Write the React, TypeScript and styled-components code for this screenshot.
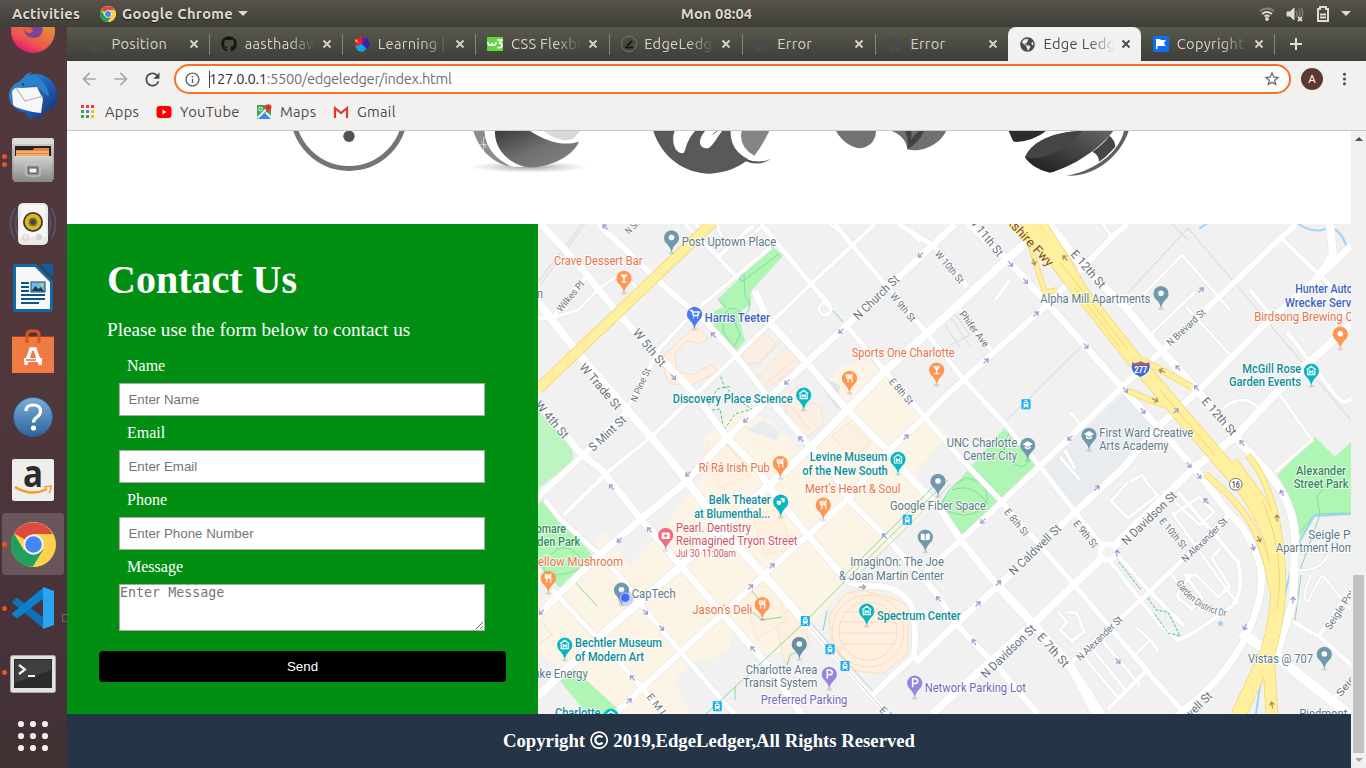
import React from 'react';
import styled, { createGlobalStyle, css } from 'styled-components';
import { FaGithub, FaRegCopyright, FaGlobeAmericas } from 'react-icons/fa';
import { MdArrowBack, MdArrowForward, MdRefresh, MdInfoOutline, MdStarBorder, MdMoreVert } from 'react-icons/md';

const uiFont = `'Ubuntu', 'Noto Sans', sans-serif`;

const GlobalStyle = createGlobalStyle`
  * { box-sizing: border-box; }
  html, body { margin: 0; padding: 0; overflow: hidden; }
  body { font-family: 'Liberation Serif', serif; background: #fff; }
`;

/* ---------- desktop shell ---------- */
const Desktop = styled.div`
  width: 1366px;
  height: 768px;
  display: flex;
  flex-direction: column;
  overflow: hidden;
`;
const TopBar = styled.header`
  height: 27px;
  flex: none;
  display: grid;
  grid-template-columns: 1fr auto 1fr;
  align-items: center;
  padding: 0 15px 0 12px;
  background: linear-gradient(#57534c, #3f3e38);
  color: #dfdbd2;
  font: bold 14.67px/27px ${uiFont};
  text-shadow: 0 1px 1px rgba(0, 0, 0, 0.6);
`;
const BarGroup = styled.div<{ $end?: boolean }>`
  display: flex;
  align-items: center;
  justify-content: ${p => (p.$end ? 'flex-end' : 'flex-start')};
`;
const BarText = styled.span<{ $spacing?: number; $width?: number; $left?: number }>`
  letter-spacing: ${p => p.$spacing ?? 0}px;
  width: ${p => (p.$width ? `${p.$width}px` : 'auto')};
  margin-left: ${p => p.$left ?? 0}px;
  white-space: nowrap;
`;
const BarIcon = styled.span<{ $left: number }>`
  display: flex;
  margin-left: ${p => p.$left}px;
`;
const Caret = styled.i<{ $left: number }>`
  margin-left: ${p => p.$left}px;
  border: 5px solid transparent;
  border-top-color: #dfdbd2;
  border-bottom: 0;
`;
const Workspace = styled.div`
  flex: 1;
  display: flex;
  min-height: 0;
`;
const DockBar = styled.nav`
  width: 67px;
  flex: none;
  overflow: hidden;
  background: linear-gradient(#51383c 0%, #50373b 45%, #48333a 80%, #443238 91%, #40302f 100%);
`;
const DockList = styled.ul`
  list-style: none;
  margin: -27px 0 0;
  padding: 0;
`;
const DockItem = styled.li<{ $active?: boolean; $drop?: number }>`
  position: relative;
  height: 64px;
  display: flex;
  align-items: center;
  justify-content: center;
  padding-top: ${p => (p.$drop ?? 0) * 2}px;
  &::before {
    content: '';
    position: absolute;
    inset: 1px 3px 1px 2px;
    border-radius: 4px;
    background: ${p => (p.$active ? 'rgba(255,255,255,0.17)' : 'transparent')};
  }
  svg { position: relative; display: block; overflow: visible; margin-right: 1px; }
`;
const Dots = styled.span`
  position: absolute;
  left: 2px;
  top: 0;
  height: 100%;
  display: flex;
  flex-direction: column;
  justify-content: center;
  gap: 3px;
  i { width: 5px; height: 5px; border-radius: 50%; background: #e95420; }
`;
const HiddenHint = styled.span`
  position: absolute;
  left: 61px;
  top: 35px;
  color: #7d7071;
  font: 12px ${uiFont};
`;

/* ---------- browser chrome ---------- */
const Browser = styled.main`
  flex: 1;
  min-width: 0;
  display: flex;
  flex-direction: column;
`;
const TabStrip = styled.div`
  height: 34px;
  flex: none;
  display: flex;
  padding-left: 9px;
  background: linear-gradient(#5a594e, #3e3d37);
`;
const TabBox = styled.div<{ $active?: boolean; $line?: boolean }>`
  position: relative;
  width: 133.17px;
  height: 34px;
  display: flex;
  align-items: center;
  padding: 0 7.5px 0 12px;
  color: ${p => (p.$active ? '#4b4b4b' : '#d6d3c9')};
  ${p => p.$active && css`background: #f2f1f0; border-radius: 8px 8px 0 0;`}
  &::after {
    content: '';
    position: absolute;
    right: -1px;
    top: 7px;
    width: 1px;
    height: 21px;
    background: ${p => (p.$line ? '#86847b' : 'transparent')};
  }
`;
const Favicon = styled.span`
  width: 16px;
  height: 16px;
  display: flex;
  align-items: center;
  flex: none;
`;
const TabTitle = styled.span<{ $fade?: boolean }>`
  flex: 1;
  min-width: 0;
  margin-left: 7.5px;
  overflow: hidden;
  white-space: nowrap;
  font: 14.67px/32px ${uiFont};
  letter-spacing: 0.3px;
  ${p => p.$fade && css`mask-image: linear-gradient(90deg, #000 60%, transparent 96%);`}
`;
const CloseMark = styled.svg`
  width: 16px;
  height: 16px;
  flex: none;
`;
const NewTab = styled.svg`
  width: 16px;
  height: 34px;
  margin-left: 14px;
`;
const Toolbar = styled.div`
  height: 36px;
  flex: none;
  display: flex;
  align-items: center;
  padding: 0 12px 0 12px;
  background: #f2f1f0;
  color: #4e4e4e;
`;
const ToolIcon = styled.span<{ $dim?: boolean; $gap?: number }>`
  display: flex;
  margin-right: ${p => p.$gap ?? 14}px;
  color: ${p => (p.$dim ? '#a9a8a7' : '#4a4a4a')};
`;
const Omnibox = styled.div`
  width: 1117px;
  height: 30px;
  flex: none;
  display: flex;
  align-items: center;
  padding: 0 8px;
  border: 2px solid #f97024;
  border-radius: 15px;
  background: #fff;
  color: #5f6368;
`;
const Url = styled.span`
  flex: 1;
  margin-left: 8px;
  padding-bottom: 1px;
  border-left: 1px solid #444;
  font: 14.67px/16px ${uiFont};
  letter-spacing: -0.3px;
  text-indent: -1px;
  color: #707070;
  b { font-weight: 400; color: #303030; }
`;
const Avatar = styled.span`
  width: 22px;
  height: 22px;
  flex: none;
  margin: 0 12px 0 10px;
  border-radius: 50%;
  background: #5d3a31;
  color: #fff;
  text-align: center;
  font: 11.5px/22px Roboto, sans-serif;
`;
const Bookmarks = styled.div`
  height: 34px;
  flex: none;
  display: flex;
  align-items: center;
  padding: 0 0 4px 14px;
  background: #f2f1f0;
  border-bottom: 1px solid #c9c8c7;
`;
const Bookmark = styled.span<{ $w: number }>`
  width: ${p => p.$w}px;
  display: flex;
  align-items: center;
  gap: 8px;
  color: #4b4b4b;
  font: 14.67px/20px ${uiFont};
  letter-spacing: 0.3px;
  svg { width: 16px; height: 16px; flex: none; }
`;

/* ---------- page ---------- */
const Viewport = styled.div`
  flex: 1;
  display: flex;
  min-height: 0;
`;
const Page = styled.div`
  width: 1284px;
  display: flex;
  flex-direction: column;
`;
const Brands = styled.section`
  height: 93px;
  flex: none;
  background: #fff;
  svg { display: block; }
`;
const Contact = styled.section`
  height: 490px;
  flex: none;
  display: grid;
  grid-template-columns: 471px 813px;
`;
const FormPanel = styled.form`
  background: #008f12;
  color: #fff;
  padding: 33px 32px 0;
`;
const Heading = styled.h1`
  margin: 0 8px;
  font: bold 40px/46px 'Liberation Serif', serif;
`;
const Lead = styled.p`
  margin: 16px 8px -1px;
  font-size: 19.2px;
  line-height: 22px;
`;
const Field = styled.label`
  display: block;
  height: 67px;
  padding: 17px 21px 0 20px;
  font-size: 16px;
  line-height: 18px;
`;
const FieldName = styled.span`
  display: block;
  padding-left: 8px;
  margin-bottom: 8px;
`;
const control = css`
  display: block;
  width: 366px;
  margin: 0;
  border: 1px solid #a9a9a9;
  border-radius: 0;
  background: #fff;
  outline: none;
  &::placeholder { color: #757575; }
`;
const Input = styled.input`
  ${control}
  height: 33px;
  padding: 0 8.4px;
  font: 13.333px 'Liberation Sans', sans-serif;
`;
const TextArea = styled.textarea`
  ${control}
  height: 47px;
  padding: 0;
  resize: both;
  font: 13.333px 'DejaVu Sans Mono', monospace;
`;
const Send = styled.button`
  display: block;
  width: 407px;
  height: 31px;
  margin-top: 43px;
  border: 0;
  border-radius: 4px;
  background: #000;
  color: #fff;
  font: 13.333px 'Liberation Sans', sans-serif;
`;
const Footer = styled.footer`
  flex: 1;
  display: flex;
  align-items: center;
  justify-content: center;
  gap: 5px;
  background: #253447;
  color: #fff;
  font: bold 18.72px/22px 'Liberation Serif', serif;
  svg { width: 18.3px; height: 18.3px; margin: -2px 0 0; }
`;
const ScrollTrack = styled.div`
  width: 15px;
  display: flex;
  flex-direction: column;
  align-items: center;
  background: #f1f1f1;
`;
const ScrollArrow = styled.i<{ $up?: boolean }>`
  border: 4px solid transparent;
  ${p => (p.$up
    ? css`margin-top: 6px; border-top: 0; border-bottom-color: #505050;`
    : css`margin-top: 5px; border-bottom: 0; border-top-color: #a3a3a3;`)}
`;
const Thumb = styled.div`
  width: 11px;
  height: 178px;
  margin-top: 434px;
  background: #c1c1c1;
`;

/* ---------- icons ---------- */
const ChromeLogo = ({ size }: { size: number }) => (
  <svg width={size} height={size} viewBox="0 0 48 48">
    <circle cx="24" cy="24" r="24" fill="#fdd14b" />
    <path d="M24 24 3.2 12A24 24 0 0 1 44.8 13H24z" fill="#dd4b3e" />
    <path d="M3.2 12A24 24 0 0 0 24 48l10.5-18L24 24 13.6 30z" fill="#1fa15d" />
    <path d="M24 13h20.8A24 24 0 0 1 23 48l11-18z" fill="#fdd14b" />
    <circle cx="24" cy="24" r="11" fill="#f1f1f1" />
    <circle cx="24" cy="24" r="8.8" fill="#4487f4" />
  </svg>
);

const Firefox = () => (
  <svg width="46" height="46" viewBox="0 0 46 46">
    <defs><linearGradient id="fx" x1="0.8" y1="0" x2="0.3" y2="1"><stop offset="0.35" stopColor="#e08a38" /><stop offset="0.75" stopColor="#ef5350" /><stop offset="1" stopColor="#e60f80" /></linearGradient></defs>
    <circle cx="23" cy="22" r="22" fill="url(#fx)" />
    <path d="M13 16q0 12 10 13t10-13z" fill="#7b4596" />
    <path d="M12 19q6-3 10 1 3 4-5 4z" fill="#e8603a" />
  </svg>
);
const Thunderbird = () => (
  <svg width="48" height="48" viewBox="0 0 48 48">
    <defs><linearGradient id="tb" x1="0" y1="0" x2="1" y2="1"><stop offset="0" stopColor="#3f97d6" /><stop offset="0.5" stopColor="#1d67bf" /><stop offset="1" stopColor="#1b2768" /></linearGradient></defs>
    <path d="M13 9C15 3 18 1 23 0l-3 3c14-4 28 5 28 21 0 8-3 13-7 15l1-4-5 7v-5l-6 10-5-2-5 3-5-7C6 38 0 32 0 24c0-8 6-14 13-15z" fill="url(#tb)" />
    <path d="M3 20Q5 14 13 16l15-1 6 12-2 14C20 40 7 36 4 33z" fill="#f7f7f7" />
    <path d="m7 16 9 13 18-5" fill="none" stroke="#b4b5b9" strokeWidth="1.2" />
    <path d="M8 16Q10 5 21 3q17 4 19 22L27 14q-8-2-19 2z" fill="#2d80ca" />
    <circle cx="14" cy="12.500" r="1.2" fill="#173c66" />
  </svg>
);
const Files = () => (
  <svg width="44" height="46" viewBox="0 0 44 46">
    <defs><linearGradient id="fi" x2="0" y2="1"><stop stopColor="#d2d2d0" /><stop offset="1" stopColor="#888886" /></linearGradient></defs>
    <rect x="1" y="2" width="42" height="41" rx="2" fill="url(#fi)" />
    <rect x="1" y="1" width="42" height="6" rx="2" fill="#dcdcda" />
    <rect x="4" y="9" width="36" height="10" fill="#27221f" />
    <path d="M5 19v-6h17l1-2h15v8z" fill="#e88436" /><path d="M5 15h33M5 18h33" stroke="#fbd9ab" />
    <rect x="2.500" y="19" width="39" height="26" rx="1.500" fill="url(#fi)" />
    <rect x="15" y="28" width="14" height="11" rx="2" fill="#8f8f8d" stroke="#d1d1cf" />
    <rect x="18" y="31" width="8" height="5" fill="#f4f4f2" stroke="#555" />
  </svg>
);
const Speaker = () => (
  <svg width="48" height="44" viewBox="0 0 48 44">
    <path d="M6 6q-9 16 0 31M10 8q-7 14 0 27M42 6q9 16 0 31M38 8q7 14 0 27" fill="none" stroke="#526e9d" strokeWidth="2" opacity=".5" />
    <rect x="9" y="1" width="30" height="42" rx="5" fill="#e9e9e7" />
    <path d="M12 3h24l2 32H10z" fill="#fbfbfa" opacity=".7" />
    <circle cx="24" cy="20" r="10" fill="#3d3b37" /><circle cx="24" cy="20" r="8.200" fill="#dbb820" />
    <circle cx="24" cy="20" r="4.500" fill="#8e7720" /><circle cx="24" cy="20" r="2.700" fill="#3b4656" />
    <circle cx="30" cy="35" r="3" fill="#d3d3d1" /><rect x="14" y="33" width="5" height="5" rx="1" fill="none" stroke="#ccc" />
  </svg>
);
const Writer = () => (
  <svg width="40" height="48" viewBox="0 0 40 48">
    <path d="M3 0h20l17 17v28a3 3 0 0 1-3 3H3a3 3 0 0 1-3-3V3a3 3 0 0 1 3-3z" fill="#0f6aa5" />
    <path d="M28 0h12v12q-7-2-12-12z" fill="#0a60a0" />
    <path d="M3 3h19l15 15v27H3z" fill="#f7f7f7" />
    <path d="M8 19h8M8 23h8M8 27h8M8 31h24M8 35h24M8 39h18" stroke="#0f5586" strokeWidth="2" />
    <rect x="18" y="18" width="14" height="10" fill="#73bce9" stroke="#164d73" />
    <path d="m18.500 27 4-5 3 3 2-2 4 4.500z" fill="#173e55" /><circle cx="29" cy="20.500" r="1.500" fill="#f2c44b" />
  </svg>
);
const Software = () => (
  <svg width="42" height="44" viewBox="0 0 42 44">
    <path d="M0 6h42v8H0z" fill="#a93f14" />
    <path d="M0 7h42v36H0z" fill="#ee7b43" /><path d="M0 33h42v10H0z" fill="#f27a47" />
    <path d="M15 13V5q0-4 4-4h4q4 0 4 4v8" fill="none" stroke="#d9541d" strokeWidth="3" />
    <path d="m13.500 35 5.500-16h4l5.500 16" fill="none" stroke="#fff" strokeWidth="3.600" />
    <path d="M12 30h18" stroke="#fff" strokeWidth="4" /><path d="M14 30h10" stroke="#e66c32" strokeWidth="1.500" />
  </svg>
);
const HelpIcon = () => (
  <svg width="40" height="40" viewBox="0 0 40 40">
    <defs><linearGradient id="hp" x2="0" y2="1"><stop stopColor="#7aaedb" /><stop offset="1" stopColor="#2e6499" /></linearGradient></defs>
    <circle cx="20" cy="20" r="19.500" fill="url(#hp)" stroke="#2e5f92" />
    <path d="M13 14q0-6 7-6 7.500 0 7.500 6 0 4-4 6.500-3 2-3 5" fill="none" stroke="#fff" strokeWidth="3.200" />
    <circle cx="20.500" cy="31" r="2.600" fill="#fff" />
  </svg>
);
const Amazon = () => (
  <svg width="42" height="42" viewBox="0 0 42 42">
    <rect width="42" height="42" rx="2" fill="#eeeeed" />
    <text x="11" y="28" fontFamily="'Open Sans', sans-serif" fontWeight="700" fontSize="38" textLength="20" lengthAdjust="spacingAndGlyphs" fill="#2b2b2b">a</text>
    <path d="M3 28q16 10 32 2" fill="none" stroke="#f79a1d" strokeWidth="2.500" />
    <path d="m32 28 7-1q0 4-2 7" fill="none" stroke="#f79a1d" strokeWidth="1.500" />
  </svg>
);
const Code = () => (
  <svg width="42" height="42" viewBox="0 0 42 42">
    <path d="M0 14.500 5 10.500 32 31v11L0 15.500z" fill="#1070b8" />
    <path d="M0 27.500 5 31.500 32 11V0L0 26.500z" fill="#0c82ce" />
    <path d="m31 0 11 4v34l-11 4z" fill="#2aa5ed" />
  </svg>
);
const Terminal = () => (
  <svg width="46" height="38" viewBox="0 0 46 38">
    <rect x=".5" y=".5" width="45" height="37" rx="2" fill="#e2e2e0" stroke="#a9a9a7" />
    <path d="M4 4h38v29H4z" fill="#2b2b2b" /><path d="M5 5h36v10L5 28z" fill="#3f3f3e" />
    <path d="m9 10 6 4.500-6 4.500M18 21h7" fill="none" stroke="#f2f2f2" strokeWidth="2.200" />
  </svg>
);
const AppGrid = () => (
  <svg width="32" height="32" viewBox="0 0 32 32" fill="#f1efee">
    {[4, 16, 28].map(y => [4, 16, 28].map(x => <circle key={`${x}-${y}`} cx={x} cy={y} r="3.100" />))}
  </svg>
);

const DarkGlobe = () => <FaGlobeAmericas size={15} color="#4b4c4b" />;
const RedBlue = () => (
  <svg width="16" height="16" viewBox="0 0 16 16">
    <path d="M8 0 1 4v7l7-3z" fill="#ed1c2b" /><path d="m8 0 7 5-2 6-5-3z" fill="#5a25b8" /><path d="m8 8-7 2 3 5 5 1 4-4z" fill="#0aa6e0" />
    <path d="m8 8 5 5 3-5-3-6z" fill="#3422a3" /><path d="m1 5 4 2-3-4z" fill="#fde042" />
  </svg>
);
const W3 = () => (
  <svg width="16" height="16" viewBox="0 0 16 16">
    <rect y="1" width="16" height="14" fill="#63d63f" />
    <path d="M1 6q0 4 2.500 3Q5 9 5 7q0 3 2 2 2 0 2-3M10 4h5l-2.500 3Q15 7 15 9.500t-4.500 2" fill="none" stroke="#fff" strokeWidth="1.700" />
  </svg>
);
const Compass = () => (
  <svg width="16" height="16" viewBox="0 0 16 16"><path d="M5 .7h6L15.300 5v6L11 15.300H5L.7 11V5z" fill="#484842" stroke="#77766e" /><path d="m6 10 5-5M4 11.500h8" stroke="#111" strokeWidth="1.600" /></svg>
);
const Flag = () => (
  <svg width="16" height="16" viewBox="0 0 16 16"><rect width="16" height="16" rx="1" fill="#0b6fee" /><path d="M3 3v10h1.500v-3h8l-1.500-3 2-3H8L7 3z" fill="#fff" /></svg>
);

const tabs = [
  { title: 'Position', icon: <DarkGlobe />, line: true },
  { title: 'aasthadaw', icon: <FaGithub size={16} color="#161614" />, line: true, fade: true },
  { title: 'Learning | ', icon: <RedBlue />, line: true, fade: true },
  { title: 'CSS Flexbox', icon: <W3 />, line: true, fade: true },
  { title: 'EdgeLedger', icon: <Compass />, line: true, fade: true },
  { title: 'Error', icon: <DarkGlobe />, line: true },
  { title: 'Error', icon: <DarkGlobe /> },
  { title: 'Edge Ledger', icon: <FaGlobeAmericas size={15} color="#4b4b4b" />, active: true, fade: true },
  { title: 'Copyright ', icon: <Flag />, line: true, fade: true },
];

const dock = [
  { icon: <Firefox /> }, { icon: <Thunderbird /> }, { icon: <Files />, dots: 2 }, { icon: <Speaker /> },
  { icon: <Writer /> }, { icon: <Software /> }, { icon: <HelpIcon />, drop: 1 }, { icon: <Amazon /> },
  { icon: <ChromeLogo size={45} />, dots: 1, active: true }, { icon: <Code />, dots: 1, hint: true },
  { icon: <Terminal />, dots: 1, drop: 1.5 }, { icon: <AppGrid /> },
];

/* ---------- map ---------- */
const roads: [string, number][] = [
  ['M541 224 578 264 621 317 698 397 726 437 758 469 768 486 805 532 848 582', 7],
  ['M848 582Q862 587 880 586Q902 589 912 606Q917 630 914 656L871 696', 6],
  ['M538 302 581 357 651 437 678 469 725 532 765 576 805 622', 8],
  ['M805 622 871 696 888 714', 5],
  ['M598 224 665 287 705 321 735 354 771 401 811 447 831 469 848 499 885 536 935 592 958 626 1002 672 1038 714', 6],
  ['M755 291 768 321 808 364 848 411 888 451 902 469 938 506 962 542 998 586 1035 626 1070 666 1095 714', 7],
  ['M998 586 1035 626 1070 666 1102 716', 9],
  ['M685 224 718 257 738 279', 4], ['M718 257 748 230 754 226', 4],
  ['M761 224 811 284 830 306', 5], ['M825 303a6 6 0 1 0 6 5z', 3],
  ['M845 324 885 371 925 417 962 460 1002 502 1072 582 1145 669 1185 714', 5],
  ['M835 224 851 244 891 291 925 331 965 381 1005 424 1042 469 1075 512 1108 552', 5],
  ['M1042 469 1075 512', 3], ['M898 224 931 244 945 257 967 287', 5], ['M958 307 992 351', 4],
  ['M968 224 1005 257 1048 304 1125 391 1158 427 1195 469', 7],
  ['M1195 469 1228 512Q1250 530 1261 569Q1265 600 1241 646Q1222 680 1185 709L1178 716', 7],
  ['M1048 222 1078 261 1125 307 1162 351 1198 391 1235 437 1265 469Q1293 500 1295 536L1293 602 1276 655', 8],
  ['M1241 633 1281 660 1351 716', 10],
  ['M698 307 661 347 628 406', 4], ['M771 247 695 311', 4],
  ['M875 224 811 284 735 357 651 437 608 472 564 515', 4],
  ['M628 411 581 457 538 497', 6], ['M538 401 581 454 601 469 641 519 681 566 725 617 771 669 801 714', 7],
  ['M955 224 931 247 805 364 728 437 698 469 681 486 641 519 598 556 561 592 538 616', 7],
  ['M1048 224 1005 261 945 317 885 371 811 447 765 489 681 566 605 632 538 696', 8],
  ['M1128 224 1112 237 1048 304 992 354 945 397 925 417 885 454 848 499 765 574 681 652 641 689 615 714', 6],
  ['M1296 224 1282 237 1162 351 1125 384 1042 464 1002 502 962 539 925 572', 6],
  ['M1351 246 1328 268 1262 327 1198 391 1158 427 1122 469 1075 512 998 586 945 634 916 662', 7],
  ['M1330 224 1333 254 1317 279', 8],
  ['M1351 324 1275 394 1235 437 1195 467 1108 552 1035 622 945 702 932 714', 8],
  ['M1072 662 1145 596 1232 512', 5], ['M1108 709 1145 672', 4],
  ['M545 500 561 520 600 555 625 582 645 610 681 652 725 704 735 714', 5],
  ['M552 590 605 646 642 688 664 714', 5],
  ['M601 286 578 310 552 318', 3], ['M538 318 552 318 587 276', 4], ['M600 288 623 272 640 292', 3],
  ['M1129 309 1182 255 1230 310M1186 307 1232 357M1150 335 1195 292', 3],
  ['M1280 237 1330 285 1345 315M1250 290 1275 320M1287 332 1335 395Q1345 407 1351 398', 4],
  ['M1280 395 1312 440 1275 472M1222 410Q1240 392 1258 407', 3],
  ['M1106 556 1160 625 1178 640Q1190 637 1232 606Q1245 590 1238 562L1178 492M1112 548 1148 590 1184 626', 4],
  ['M1130 482 1142 475Q1150 488 1158 495L1128 518 1111 501 1128 482', 3],
  ['M1173 515 1199 497 1214 512 1200 525 1163 491M1172 513 1220 580 1238 604', 3],
  ['M1172 575 1184 592Q1196 612 1222 614M1192 575Q1176 590 1178 598L1192 609 1202 598 1185 575 1196 575 1218 597 1230 587 1212 558 1220 548', 3],
  ['M1058 612 1067 622 1060 630 1072 641 1084 632 1077 613 1067 612', 3],
  ['M1072 582 1096 610 1150 672M1090 646 1127 692M1135 655 1150 640 1137 628M1150 640 1158 650', 3],
  ['M1100 638 1140 685M1078 650 1120 700', 3], ['M1060 457 1080 480M1070 412 1080 424', 3],
  ['M1293 622 1320 637 1351 665M1318 637 1351 590M1332 700 1351 680', 4],
  ['M1311 575Q1300 600 1308 601L1322 575 1351 610M1298 570Q1320 572 1328 555', 2],
  ['M1103 224 1112 237M995 300 1010 280M1075 469 1065 450', 3],
  ['M696 224Q705 235 690 247M717 224Q725 250 738 244T762 226', 3],
  ['M830 224 846 236M908 230 920 242', 3],
];
const freeway: [string, number][] = [
  ['M1025 226 1038 271 1045 292 1057 290', 4], ['M1042 222 1068 262 1090 300', 6],
  ['M1142 360 1165 372 1192 387', 5], ['M1128 391 1150 400 1175 408', 5],
  ['M1248 455 1258 469Q1275 500 1280 540L1282 569', 5], ['M1205 474Q1235 498 1250 522T1272 590', 5],
  ['M1027 220 1072 281 1132 357 1178 411 1228 469Q1275 520 1278 575Q1280 610 1268 652L1238 716', 14],
  ['M1232 462 1262 504Q1285 550 1278 602L1268 650 1272 716', 11],
];
const cream = [
  '704,437 741,408 770,420 800,450 848,411 829,380 843,366 866,360 890,378 948,436 915,472 935,505 900,535 845,585 792,650 765,655 735,630 728,650 705,663 697,658 675,680 690,714 620,714 590,696 538,650 538,600 560,590 600,555 596,540 605,532 630,566 650,545 681,505 703,475',
];
type Kind = 'dot' | 'food' | 'bar' | 'cart' | 'museum' | 'book' | 'school' | 'park' | 'health' | 'mask';
const SLATE = '#7199ae', ORANGE = '#ff9752', TEAL = '#08b7c5', PURPLE = '#9587dd';
const pins: [number, number, string, Kind][] = [
  [671.5, 237.5, SLATE, 'dot'], [624, 278, ORANGE, 'bar'], [694.5, 314, '#4a7cf0', 'cart'], [936.7, 369.7, ORANGE, 'bar'],
  [849.5, 378, ORANGE, 'food'], [803.7, 394.7, TEAL, 'museum'], [898, 459, TEAL, 'museum'], [780.3, 463, ORANGE, 'food'],
  [780.7, 501.7, TEAL, 'mask'], [823.3, 504.7, ORANGE, 'food'], [665.7, 535, '#f26d7d', 'health'], [548.3, 578, ORANGE, 'food'],
  [621.5, 589.7, SLATE, 'dot'], [762.3, 604.3, ORANGE, 'food'], [564.7, 644.7, TEAL, 'museum'], [611, 715.7, TEAL, 'museum'],
  [799.3, 644, '#648fa5', 'dot'], [829.3, 674, PURPLE, 'park'], [914.7, 682.7, PURPLE, 'park'], [866.7, 610.7, TEAL, 'museum'],
  [925.3, 536.7, SLATE, 'book'], [938, 481, SLATE, 'dot'], [1161, 293.3, SLATE, 'dot'], [1340.3, 333.7, ORANGE, 'dot'],
  [1311.3, 370.7, TEAL, 'museum'], [1027.7, 445, SLATE, 'school'], [1089, 435, SLATE, 'school'], [1324.3, 654, SLATE, 'dot'],
];
const glyphs: Record<Kind, React.ReactNode> = {
  dot: <circle r="2.800" fill="#fff" />,
  food: <path d="M-3-4v3q0 1.500 1.500 1.500V4.500M-1.500-4v4M0-4v3q0 1.500-1.500 1.500M2.500 4.500V-4q-1.800 1.500-1.500 4.500h1.500" stroke="#fff" strokeWidth="1.100" fill="none" />,
  bar: <path d="M-3.800-3.500h7.600L.6.500v3h2v1h-5.200v-1h2v-3z" fill="#fff" />,
  cart: <path d="M-4.500-3.500h2l1.500 5h4.500l1-3.500H-2M-1.300 3.500h1M2.500 3.500h1" stroke="#fff" strokeWidth="1.500" fill="none" />,
  museum: <path d="M-4.500-1 0-4.500 4.500-1M-3.500-.5v4.500h7v-4.500M-1.500 3V0L0 1.500 1.500 0v3" stroke="#fff" strokeWidth="1.200" fill="none" />,
  book: <path d="M-4.500-3q3-.5 4 .8v6q-1.500-1-4-.8zM4.500-3q-3-.5-4 .8v6q1.500-1 4-.8z" fill="#fff" />,
  school: <path d="M-5-1 0-4l5 3-5 3zM-3 1v2q3 2.500 6 0V1L0 3z" fill="#fff" />,
  park: <path d="M-2 4.500v-8.500h2.300q2.700.2 2.700 2.500T.3.800H-2" stroke="#fff" strokeWidth="1.600" fill="none" />,
  health: <><rect x="-4" y="-2.500" width="8" height="6.500" rx="1" fill="#fff" /><path d="M-1.500-3.800h3M0-1v3.600M-1.800.8h3.600" stroke="#f26d7d" strokeWidth="1.200" /></>,
  mask: <path d="M-4-1h4.500v3q-2 2.500-4.500 0zM0-3.500h4v4H1.500v-2.500H0z" fill="#fff" />,
};
const cSlate = '#5d7a8a', cOrange = '#e8734a', cTeal = '#0d8f9a', cGreen = '#2b8d52', cBlue = '#3f64c0', cRed = '#cc566e', cPurple = '#7767b8';
const mediumLabels = [cTeal, cBlue, cGreen];
const places: [string, number, number, number, string, number?][] = [
  ['Post Uptown Place', 681.7, 246, 94.5, cSlate], ['Crave Dessert Bar', 554, 265, 88.5, cOrange], ['n', 537, 297.5, 6, cSlate],
  ['Harris Teeter', 704.7, 322, 65.3, cBlue], ['Discovery Place Science', 672.7, 403, 120, cTeal], ['Sports One Charlotte', 851.7, 357, 103, cOrange],
  ['Levine Museum', 809.7, 460.7, 77.5, cTeal], ['of the New South', 802.3, 474.5, 85.5, cTeal], ['Rí Rá Irish Pub', 698.7, 472, 71, cOrange],
  ["Mert's Heart & Soul", 805, 492.5, 95.5, cOrange], ['Belk Theater', 708.7, 504, 62, cTeal], ['at Blumenthal...', 694.3, 517.5, 76, cTeal],
  ['Pearl. Dentistry', 676, 531.5, 75, cRed], ['Reimagined Tryon Street', 676, 545.3, 121.5, cRed], ['Jul 30 11:00am', 676, 556.7, 60, cRed, 11],
  ['CapTech', 631.7, 598.3, 44, cSlate], ["Jason's Deli", 692.3, 613.5, 60, cOrange], ['Bechtler Museum', 575, 647, 87, cTeal],
  ['of Modern Art', 575, 660.5, 69, cTeal], ['Duke Energy', 526, 678, 61.7, cSlate], ['Charlotte', 555, 717, 45.5, cTeal],
  ['Romare', 529, 533, 37, cGreen], ['Bearden Park', 515, 546, 65.3, cGreen], ['Mellow Mushroom', 528, 565.7, 95, cOrange],
  ['Google Fiber Space', 890, 510.3, 96, cSlate], ['ImaginOn: The Joe', 850.3, 566.3, 93.7, cSlate], ['& Joan Martin Center', 839, 580, 104.7, cSlate],
  ['Spectrum Center', 877, 620, 83.7, cTeal], ['Charlotte Area', 745.7, 673.7, 71.7, cSlate], ['Transit System', 743, 687.3, 74.3, cSlate],
  ['Preferred Parking', 760.7, 704.3, 86.7, cPurple], ['Network Parking Lot', 924.7, 691.7, 101.3, cPurple], ['Alpha Mill Apartments', 1040.3, 303, 110, cSlate],
  ['Hunter Auto', 1295.3, 293.3, 57.5, cBlue], ['Wrecker Service', 1285, 307, 81, cBlue], ['Birdsong Brewing Co', 1254.3, 321.3, 105, cOrange],
  ['McGill Rose', 1242.3, 372.7, 59, cTeal], ['Garden Events', 1229, 386, 72, cTeal], ['UNC Charlotte', 946.7, 447, 70.7, cSlate],
  ['Center City', 963.3, 460.3, 53.7, cSlate], ['First Ward Creative', 1099.3, 437, 94, cSlate], ['Arts Academy', 1099.3, 450.3, 69.3, cSlate],
  ['Alexander', 1296, 474.7, 50, cGreen], ['Street Park', 1293.7, 488.3, 54.7, cGreen], ['Seigle Point', 1308.3, 538.7, 62, cSlate],
  ['Apartment Homes', 1276, 552, 90, cSlate], ['Vistas @ 707', 1248, 662.7, 65, cSlate], ['Piedmont', 1299.3, 718, 48, cSlate],
];
const streets: [string, number, number, number, number, number][] = [
  ['W 5th St', 649.7, 347.5, 45, 51, 12], ['W Trade St', 600.5, 386.5, 57, 49, 12], ['W 4th St', 552, 419.7, 45, 50, 12],
  ['S Mint St', 607.3, 433.3, 46, -43, 12], ['N Pine St', 640.5, 385, 36, -66, 9.5], ['Wilkes Pl', 570.3, 296.3, 37, -50, 9.5],
  ['N Sm', 633, 226, 18, -45, 10], ['N Church St', 876.3, 297.3, 58, -44, 12], ['W 9th St', 903, 307.3, 34, 50, 10],
  ['E 8th St', 901.3, 391.3, 31, 49, 10], ['W 10th St', 949.5, 267, 39, 50, 10], ['W 11th St', 986, 236, 48, 51, 12],
  ['E 12th St', 1088.3, 269, 46, 49, 12], ['E 12th St', 1219.3, 416.3, 46, 49, 12], ['N Brevard St', 1186, 327.3, 49, -43, 10],
  ['Phifer Ave', 974.3, 329, 42, 53, 10], ['E 8th St', 1016.7, 522.3, 32, 50, 10], ['N Caldwell St', 1035, 549.7, 67, -44, 12],
  ['E 9th St', 1085.7, 534, 32, 50, 10], ['N Davidson St', 1149, 518, 71, -44, 12], ['E 10th St', 1173.3, 533.3, 37, 50, 10],
  ['N Alexander St', 1204.3, 540, 59, -44, 10], ['N Alexander St', 1099.3, 638.3, 59, -44, 10], ['N Davidson St', 1008.3, 651.3, 71, -44, 12],
  ['E 7th St', 1053.3, 650, 41, 48, 12], ['N Caldwell St', 1186, 717, 67, -44, 12], ['Seigle Point', 1342, 606, 54, -57, 10],
  ['Seigle', 1349, 682, 34, -50, 10], ['E M L K', 660, 709, 36, 53, 10], ['E Trade', 894, 721, 36, 45, 10],
];
const arrows: [number, number, number][] = [
  [605, 227, -135], [713.5, 335, -135], [673.5, 377, 48], [787, 382, 137], [746, 420, 137], [801, 439, -135], [841, 331, 137], [920.5, 255, 137],
  [906, 437, -45], [1010.500, 264, 50], [1025.500, 281, 50], [1036, 314, -43], [986, 361, -43], [1086, 346, 50], [1125.500, 390, 50],
  [1143, 411, 50], [1070, 438, 137], [1189, 465, 50], [1178, 368, -130], [1196.500, 388, -130], [1242, 443, -130], [1201, 290, -43], [1176, 411, -43],
  [688, 474, 137], [611.500, 487, -130], [649.500, 530, -130], [619.500, 540, 137], [541.500, 612, 137], [645.500, 612, 50], [661.500, 628, 50],
  [772, 566, -45], [750.500, 587, -45], [753, 649, -130], [632.500, 678, -130], [629, 701, -43], [862.500, 587, 0], [884.500, 536, -130],
  [938.500, 599, -130], [983, 521, 137], [998.500, 583, -45], [978, 604, -45], [974, 642, -120], [1097, 488, -45], [1117, 553, -85],
  [1199, 476, 50], [1206, 501, -135], [1118, 661, 50], [1253, 547, 75], [1293, 600, -88], [1245, 627, 110], [1282, 493, -120],
];
const yellowArrows: [number, number, number][] = [[1034, 262, 70], [1065, 258, -135], [1162, 371, -155], [1155, 400, 25], [1259, 539, 65], [1277, 518, -95], [1272, 705, -100]];
const stations: [number, number][] = [[907.3, 519.7], [805.3, 621], [830, 649.3], [845, 666], [717.3, 706.3], [1026, 404.3]];

const Arrow = ({ at: [x, y, a], color }: { at: [number, number, number]; color: string }) => (
  <path transform={`translate(${x} ${y}) rotate(${a})`} d="M-3.500 0H2.500M0-2.500 3 0 0 2.500" fill="none" stroke={color} strokeWidth="1.300" />
);

const CityMap = () => (
  <svg width="813" height="490" viewBox="538 224 813 490" fontFamily="Roboto, sans-serif">
    <rect x="538" y="224" width="813" height="490" fill="#f1f1f1" />
    {cream.map(p => <polygon key={p} points={p} fill="#fcf5e5" />)}
    <path d="M1125 393 1158 427 1075 510 1045 466zM746 430l17-10 18 12-5 9-15-6z" fill="#e9ecef" />
    <g fill="#aff5b4">
      <path d="M771 245l12 11-32 35v13l-13 10 7 27-10 11-21-22v-19l9-4-5-8 20-19zM543 499l50 57-32 33-23-24v-60zM560 681l14-12 43 39-14 8h-14zM1005 427l32 37-75 71-27-27zM1315 437l20 20 16-15v72l-37 2-17 27q0-40-20-68z" />
      <path d="M538 411l28 26q10 12 6 25l-34 27z" fill="#bdf5c0" />
    </g>
    <g fill="none" stroke="#85dca0" strokeWidth="1">
      <path d="M780 253 743 281l-4-2 5-6 1 23q10 10-1 20-15-15-19-1t0 20l9 12 6-12-8-20M718 299l8 9M829 306l14 16M575 582l22 24M941 508q5-22 25-30 22 3 21 22-12 25-46 8M952 490q20-8 36 14M1010 432q-12 15 0 28t20 0M1296 536l20-22 35-1M1300 570l20-55-3-18 20-28M1301 575l-6 45M550 555q15-15 28 0t-15 19-15-15" />
      <path d="M719 372l5 14 18 17 10 6-17 5-11 16-4-21-15 2 12-22 15-3" stroke="#48c980" strokeDasharray="3 2" />
      <path d="M1077 514l6 5 4 10 15 14" />
    </g>
    <g fill="#feefe0" stroke="#fbd7b3" strokeWidth=".8">
      <path d="M665 354l30-28 13 12-8 6-13-3-12 13 2 18 15 3 20-11 5 8-25 13-20-1q-12-10-7-30z" />
      <path d="M742 355l22-22 12 10-16 20-14 1zM760 375l26-28 16 17-36 25-12-12zM783 400l14-14 10 16 14 4 3 18-18 14-18-20zM832 435l17-12 22 20-20 16zM775 620l17-13 18 35-25 22z" opacity=".8" />
      <path d="M708 442l18 0 25 34-30 12-18-30zM752 515l28-6 12 40-28 6zM745 600l12-16 20 6 10 30-30 20z" opacity=".6" />
      <path d="M829 616l16-22 16-4 30 8 18 8-2 48-24 20-34-4-18-28z" />
      <circle cx="868" cy="631" r="36" /><circle cx="868" cy="631" r="29" fill="none" />
      <path d="M843 612h50M841 622h54M840 633h56M843 644h50M757 365l25-24M766 384l28-24M792 407l18 23M704 460l22-16 20 20M540 620l12 15-14 10" fill="none" />
    </g>
    <path d="M825 378l15 8-2 12 12 14-14-4-16-24z" fill="#e2e3e5" />
    <g fill="none" stroke="#dedede" strokeWidth="1.200">
      <path d="M538 282 582 224M541 284 585 224M1128 293 1188 228 1351 420M1172 224 1188 240M1080 348 1003 424M946 319q10-8 14 2l10 14-20 10M945 325l15 22M950 316l20 30" />
    </g>
    <path d="M1298 224q20 12 32 2 15 8 17 25M1199 229l10-7M1351 514l-37 2-18 32-12 50-20 60-8 56" fill="none" stroke="#9fd3fb" strokeWidth="2" />
    <g fill="none" strokeLinejoin="round">
      {roads.map(([d, w]) => <path key={d + w} d={d} stroke="#e4e5e6" strokeWidth={w + 1.2} />)}
      {roads.map(([d, w]) => <path key={d + w} d={d} stroke="#fff" strokeWidth={w} />)}
      <circle cx="1108" cy="552" r="8" stroke="#fff" strokeWidth="5" fill="#f1f1f1" />
      <path d="M713 222 538 389" stroke="#f2dc75" strokeWidth="11" /><path d="M713 222 538 389" stroke="#fff0a1" strokeWidth="9" />
      {freeway.map(([d, w]) => <path key={d} d={d} stroke="#f4d66e" strokeWidth={w + 1.6} />)}
      {freeway.map(([d, w]) => <path key={d} d={d} stroke="#fff09f" strokeWidth={w} />)}
      <path d="M1060 262 1128 350M1075 288 1120 348M1160 390 1215 455M1262 500Q1286 555 1277 610" stroke="#f4d66e" strokeWidth="1" />
      <path d="M948 480 848 578 805 622 705 715M944 476 844 576" stroke="#86d9a1" strokeWidth="1" />
      <path d="M951 484 851 582M805 622l66 74 14 16M808 620l66 72" stroke="#cfd0d1" strokeWidth="1" />
      <path d="M827 611l-4 20M752 591l12 15M750 610l12 10 20-3M735 700v-13M787 665l3-10 8-4" stroke="#86d9a1" />
      <path d="M1119 562l22 28M1148 598l8 12 12 2 12 24-12-3-14-20" stroke="#48c980" strokeDasharray="3 1.500" />
    </g>
    {arrows.map(a => <Arrow key={a.join()} at={a} color="#a29dcd" />)}
    {yellowArrows.map(a => <Arrow key={a.join()} at={a} color="#a99455" />)}
    <circle cx="1220.500" cy="623.500" r="2.500" fill="#9fd3fb" />
    <g fill="#66717c" stroke="#fff" strokeWidth="1.500" paintOrder="stroke" textAnchor="middle">
      {streets.map(([t, x, y, len, a, s]) => (
        <text key={`${t}${x}`} transform={`translate(${x} ${y}) rotate(${a})`} y={s * 0.35} fontSize={s} textLength={len} lengthAdjust="spacingAndGlyphs">{t}</text>
      ))}
      <text transform="translate(1030 242) rotate(47)" y="4" fontSize="12.500" textLength="62" lengthAdjust="spacingAndGlyphs" fill="#80491f" stroke="#fff0a1">kshire Fwy</text>
    </g>
    <path id="garden" d="M1176 583Q1194 613 1229 617" fill="none" />
    <text fontSize="10" fill="#66717c" stroke="#fff" strokeWidth="1.500" paintOrder="stroke"><textPath href="#garden" textLength="62" lengthAdjust="spacingAndGlyphs">Garden District Dr</textPath></text>
    {stations.map(([x, y]) => (
      <g key={x} transform={`translate(${x} ${y})`}>
        <rect x="-4.500" y="-5" width="9" height="10" rx="1" fill="#16aef0" />
        <rect x="-2.400" y="-2.500" width="4.800" height="5" rx="1" fill="#fff" />
        <path d="M-1.500-3.500h3M-1.500 2.500l-1 1.500M1.500 2.500l1 1.500" fill="none" stroke="#fff" />
        <path d="M-1.400-.8h2.800" stroke="#16aef0" strokeWidth="1.300" />
      </g>
    ))}
    <path d="M1132 362q4 2 8.700-1 4.700 3 8.700 1 4 10-8.700 15.500-12.700-5-8.700-15.500z" fill="#3f6ccc" stroke="#fff" />
    <path d="M1132 362.300q4 2 8.700-1 4.700 3 8.700 1l.5 2.500h-18z" fill="#dd5050" />
    <text x="1140.700" y="373" fontSize="9" fontWeight="700" fill="#fff" textAnchor="middle" textLength="13" lengthAdjust="spacingAndGlyphs">277</text>
    <rect x="1229.500" y="478.500" width="12.500" height="11.500" rx="5.700" fill="#fff" stroke="#777" />
    <text x="1235.700" y="487.500" fontSize="9" fontWeight="500" fill="#444" textAnchor="middle" textLength="8" lengthAdjust="spacingAndGlyphs">16</text>
    {pins.map(([x, y, color, kind]) => (
      <g key={`${x}-${y}`} transform={`translate(${x} ${y})`}>
        <ellipse cy="15.500" rx="3" ry="1.300" fill="#000" opacity=".12" />
        <path d="M0 15.500Q-.8 10-4.500 6.500A7.600 7.600 0 1 1 4.500 6.500Q.8 10 0 15.500z" fill={color} />
        {glyphs[kind]}
      </g>
    ))}
    <circle cx="625.300" cy="598" r="8" fill="#4a7cf0" opacity=".28" />
    <circle cx="625.300" cy="597.700" r="4.700" fill="#3f6bf4" stroke="#dfe6fb" strokeWidth=".8" />
    <g stroke="#fff" strokeOpacity=".85" strokeWidth="2" paintOrder="stroke" strokeLinejoin="round">
      {places.map(([t, x, y, len, color, size]) => (
        <text key={`${t}${x}`} x={x} y={y} fontSize={size ?? 12.8} textLength={len} lengthAdjust="spacingAndGlyphs" fill={color} fontWeight={mediumLabels.includes(color) ? 500 : 400}>{t}</text>
      ))}
    </g>
  </svg>
);

const BrandRow = () => (
  <svg width="1284" height="93" viewBox="67 131 1284 93">
    <defs>
      <linearGradient id="ba" x2="1" y2="1"><stop stopColor="#3b3b3b" /><stop offset=".5" stopColor="#707070" /><stop offset="1" stopColor="#858585" /></linearGradient>
      <linearGradient id="bb" x1="0" y1="1" x2="1" y2="0"><stop offset=".1" stopColor="#222" /><stop offset="1" stopColor="#666" /></linearGradient>
      <radialGradient id="bs"><stop stopColor="#777" stopOpacity=".7" /><stop offset="1" stopColor="#aaa" stopOpacity="0" /></radialGradient>
    </defs>
    <circle cx="349" cy="112.500" r="56" fill="none" stroke="#757575" strokeWidth="5" />
    <circle cx="349" cy="136.300" r="5.700" fill="#535353" />
    <ellipse cx="529" cy="167" rx="60" ry="6" fill="url(#bs)" />
    <g transform="translate(280 125) scale(.33333)">
      <path d="M580 18C600 80 640 112 690 125 640 90 615 60 614 18z" fill="#8b8b8b" />
      <path d="M614 18C617 75 655 108 700 125H735C675 105 643 65 645 18z" fill="#fff" />
      <path d="M645 18C642 80 700 125 750 127 820 125 880 90 897 50 850 65 800 50 750 18z" fill="url(#ba)" />
      <path d="M790 18Q840 55 880 42L900 18z" fill="#d9d9d9" />
      <path d="M611 35v50M595 59h34M603 49l18 20" stroke="#eee" strokeWidth="2" />
      <path d="M1120 18C1145 95 1210 145 1290 146 1340 144 1380 125 1405 103 1365 85 1350 50 1352 18z" fill="#595959" />
      <path d="M1184 18C1172 50 1185 85 1208 85 1221 80 1210 60 1245 18zM1275 18C1252 45 1255 72 1285 70 1300 60 1310 40 1326 18z" fill="#fff" />
      <path d="M1298 28l14-10" stroke="#666" strokeWidth="3" />
      <path d="M1385 18H1468Q1445 65 1423 92 1375 65 1385 18z" fill="#858585" />
      <path d="M1398 102Q1440 118 1473 101 1440 126 1395 108z" fill="#555" />
    </g>
    <g transform="translate(710 125) scale(.33333)">
      <path d="M378 18C395 50 430 70 450 70 485 66 498 40 498 18z" fill="#737373" />
      <path d="M545 18C575 30 590 50 592 73 630 85 690 60 708 18z" fill="#707070" />
      <path d="M585 18q12 25 7 55 15-20 12-55zM628 18q-28 20-36 55 35-20 50-55z" fill="#424242" />
      <path d="M896 18 908 46Q910 52 920 51 970 48 1008 18z" fill="#2c2c2c" />
      <path d="M945 97C965 50 1040 18 1120 18h90C1170 70 1090 125 1020 143 985 135 960 120 945 97z" fill="url(#bb)" />
      <path d="M945 97C965 45 1040 18 1118 18 1075 70 1005 110 945 97z" fill="#454545" />
      <path d="M1198 32Q1215 45 1216 65 1190 95 1167 110 1167 90 1147 80 1180 58 1198 32z" fill="#464646" />
      <path d="M1242 18H1256C1235 85 1160 158 1068 152 1140 143 1225 90 1242 18z" fill="#606060" />
    </g>
  </svg>
);

export default function App() {
  return (
    <Desktop>
      <GlobalStyle />
      <TopBar>
        <BarGroup>
          <BarText $spacing={0.3} $width={88}>Activities</BarText>
          <ChromeLogo size={16} />
          <BarIcon $left={6} />
          <BarText $spacing={0.35}>Google Chrome</BarText>
          <Caret $left={5} />
        </BarGroup>
        <BarText $spacing={0.1} $left={70}>Mon 08:04</BarText>
        <BarGroup $end>
          <svg width="16" height="16" viewBox="0 0 16 16" fill="none" stroke="#dfdbd2" strokeWidth="1.800"><path d="M1 5q7-5 14 0" opacity=".4" /><path d="M3 8q5-4 10 0M5.500 10.500q2.500-2 5 0" /><circle cx="8" cy="13" r="1" fill="#dfdbd2" /></svg>
          <BarIcon $left={11}><svg width="18" height="16" viewBox="0 0 18 16" fill="none" stroke="#dfdbd2"><path d="M1 6h3l4-4v12l-4-4H1z" fill="#dfdbd2" /><path d="M10 5q2 3 0 6M12.500 3q3 5 0 8M15 2q3 5 1 8" opacity=".4" strokeWidth="1.400" /><path d="m12 11 4 4m0-4-4 4" strokeWidth="1.800" /></svg></BarIcon>
          <BarIcon $left={12}><svg width="14" height="18" viewBox="0 0 14 18" fill="none" stroke="#dfdbd2" strokeWidth="2"><path d="M2 4h2V2h6v2h2v12H2z" /><path d="M4 9.500h6M4 12.500h6" /></svg></BarIcon>
          <Caret $left={11} />
        </BarGroup>
      </TopBar>
      <Workspace>
        <DockBar>
          <DockList>
            {dock.map((d, i) => (
              <DockItem key={i} $active={d.active} $drop={d.drop}>
                {d.dots && <Dots>{Array.from({ length: d.dots }, (_, n) => <i key={n} />)}</Dots>}
                {d.icon}
                {d.hint && <HiddenHint>D</HiddenHint>}
              </DockItem>
            ))}
          </DockList>
        </DockBar>
        <Browser>
          <TabStrip>
            {tabs.map((t, i) => (
              <TabBox key={i} $active={t.active} $line={t.line}>
                <Favicon>{t.icon}</Favicon>
                <TabTitle $fade={t.fade}>{t.title}</TabTitle>
                <CloseMark viewBox="0 0 16 16"><path d="m4.500 4.500 7 7m0-7-7 7" stroke="currentColor" strokeWidth="1.900" /></CloseMark>
              </TabBox>
            ))}
            <NewTab viewBox="0 0 16 34"><path d="M8 11v12M2 17h12" stroke="#e4e1d8" strokeWidth="2" /></NewTab>
          </TabStrip>
          <Toolbar>
            <ToolIcon $dim $gap={12}><MdArrowBack size={20} /></ToolIcon>
            <ToolIcon $dim $gap={11}><MdArrowForward size={20} /></ToolIcon>
            <ToolIcon $gap={11}><MdRefresh size={21} /></ToolIcon>
            <Omnibox>
              <MdInfoOutline size={17} />
              <Url><b>127.0.0.1</b>:5500/edgeledger/index.html</Url>
              <MdStarBorder size={18} />
            </Omnibox>
            <Avatar>A</Avatar>
            <MdMoreVert size={20} />
          </Toolbar>
          <Bookmarks>
            <Bookmark $w={75}>
              <svg viewBox="0 0 16 16">{['#ea4335', '#ea4335', '#ea4335', '#34a853', '#4285f4', '#fbbc05', '#34a853', '#34a853', '#fbbc05'].map((c, i) => <rect key={i} x={(i % 3) * 5} y={1 + Math.floor(i / 3) * 5} width="3" height="3" fill={c} />)}</svg>
              Apps
            </Bookmark>
            <Bookmark $w={100}>
              <svg viewBox="0 0 16 16"><rect x=".5" y="2" width="15" height="12" rx="3" fill="#f00" /><path d="m6.500 5.500 4 2.500-4 2.500z" fill="#fff" /></svg>
              YouTube
            </Bookmark>
            <Bookmark $w={77}>
              <svg viewBox="0 0 16 16"><path d="M1 1h14v14H1z" fill="#35a853" /><path d="m2 15 6-6 7 6z" fill="#4285f4" /><path d="m1 13 12-12v3L2 15zM9 9l6 6v-3l-4-4z" fill="#f5f5f5" /><circle cx="4.500" cy="5" r="1.800" fill="none" stroke="#fff" /><path d="M12 9Q9 6 9 3.500a3.300 3.300 0 0 1 6.600 0Q15 6 12 9z" fill="#e93e30" /><circle cx="12.200" cy="3.500" r="1.100" fill="#8d1b12" /></svg>
              Maps
            </Bookmark>
            <Bookmark $w={80}>
              <svg viewBox="0 0 16 16"><path d="M1 3h14v11H1z" fill="#f7f7f7" /><path d="M2 14V4l6 5 6-5v10" fill="none" stroke="#df382c" strokeWidth="2.200" /></svg>
              Gmail
            </Bookmark>
          </Bookmarks>
          <Viewport>
            <Page>
              <Brands><BrandRow /></Brands>
              <Contact>
                <FormPanel>
                  <Heading>Contact Us</Heading>
                  <Lead>Please use the form below to contact us</Lead>
                  <Field><FieldName>Name</FieldName><Input placeholder="Enter Name" /></Field>
                  <Field><FieldName>Email</FieldName><Input placeholder="Enter Email" /></Field>
                  <Field><FieldName>Phone</FieldName><Input placeholder="Enter Phone Number" /></Field>
                  <Field><FieldName>Message</FieldName><TextArea placeholder="Enter Message" /></Field>
                  <Send type="button">Send</Send>
                </FormPanel>
                <CityMap />
              </Contact>
              <Footer>Copyright <FaRegCopyright /> 2019,EdgeLedger,All Rights Reserved</Footer>
            </Page>
            <ScrollTrack>
              <ScrollArrow $up />
              <Thumb />
              <ScrollArrow />
            </ScrollTrack>
          </Viewport>
        </Browser>
      </Workspace>
    </Desktop>
  );
}
